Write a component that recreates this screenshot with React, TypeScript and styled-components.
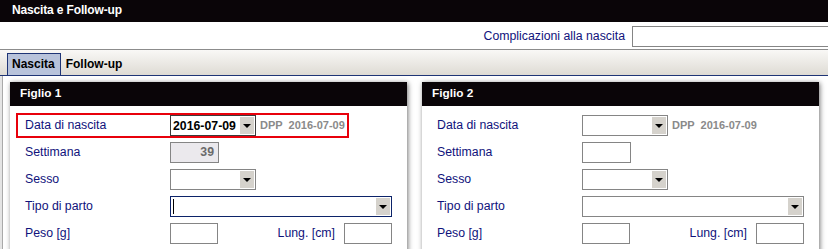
import React from "react";
import styled, { createGlobalStyle } from "styled-components";

const GlobalStyle = createGlobalStyle`
  html, body {
    margin: 0;
    padding: 0;
    background: #fff;
    font-family: "Liberation Sans", Arial, sans-serif;
  }
`;

const Screen = styled.div`
  width: 828px;
  height: 249px;
  overflow: hidden;
  background: #fff;
`;

const TitleBar = styled.div`
  height: 22px;
  line-height: 21px;
  padding-left: 12px;
  background: #0a0508;
  color: #fff;
  font-weight: bold;
  font-size: 12px;
  letter-spacing: -0.15px;
`;

const TopRow = styled.div`
  height: 28px;
  display: flex;
  justify-content: flex-end;
  align-items: flex-start;
  gap: 7px;
  padding-top: 4px;
  box-sizing: border-box;
  border-bottom: 1px solid #8c8c8c;
  overflow: hidden;
`;

const Label = styled.span<{ $width?: number }>`
  flex: none;
  width: ${(p) => (p.$width ? `${p.$width}px` : "auto")};
  color: #10137c;
  font-size: 12.3px;
  line-height: 21px;
  white-space: nowrap;
`;

const TextBox = styled.div<{ $width: number; $disabled?: boolean }>`
  flex: none;
  width: ${(p) => p.$width}px;
  height: 21px;
  box-sizing: border-box;
  border: 1px solid #858585;
  background: ${(p) => (p.$disabled ? "#ebe9ed" : "#fff")};
  color: #6a6a6a;
  font-size: 12.3px;
  font-weight: bold;
  line-height: 19px;
  text-align: right;
  padding-right: 4px;
`;

const WideBox = styled(TextBox)`
  margin-right: -12px;
`;

const TabBar = styled.div`
  height: 26px;
  box-sizing: border-box;
  padding: 3px 0 0 7px;
  display: flex;
  align-items: stretch;
  background: linear-gradient(#f9f8f6, #dedbd4);
  border-bottom: 1px solid #1f3576;
  box-shadow: 0 1px 0 #8ea2d0;
`;

const Tab = styled.div<{ $active?: boolean }>`
  padding: 0 5px 0 4px;
  font-size: 12px;
  font-weight: bold;
  line-height: 21px;
  color: #000;
  border: 1px solid ${(p) => (p.$active ? "#1f3576" : "transparent")};
  border-bottom: none;
  background: ${(p) => (p.$active ? "#b8c3db" : "transparent")};
`;

const Content = styled.div`
  display: flex;
  gap: 15px;
  padding: 6px 0 0 10px;
  height: 180px;
  background: linear-gradient(to right, #e4e4e4 0 2px, #a9a9a9 2px 3px, #fff 3px);
`;

const Panel = styled.section`
  width: 397px;
  flex: none;
  background: #fff;
  box-shadow: 1px 1px 5px rgba(0, 0, 0, 0.55);
`;

const PanelHeader = styled.div`
  height: 24px;
  line-height: 23px;
  padding-left: 10px;
  background: #0a0508;
  color: #fff;
  font-size: 11.8px;
  font-weight: bold;
`;

const PanelBody = styled.div`
  padding: 9px 15px 10px 15px;
  display: flex;
  flex-direction: column;
  gap: 6px;
`;

const Row = styled.div<{ $highlight?: boolean }>`
  display: flex;
  align-items: flex-start;
  height: 21px;
  ${(p) =>
    p.$highlight &&
    `
    align-self: flex-start;
    margin-left: -7px;
    padding: 0 2px 0 7px;
    outline: 2px solid #e8000b;
  `}
`;

const Fields = styled.div`
  flex: 1;
  display: flex;
  justify-content: space-between;
`;

const FieldGroup = styled.div`
  display: flex;
  gap: 9px;
`;

const Combo = styled.div<{ $width: number; $focused?: boolean; $dark?: boolean }>`
  flex: none;
  position: relative;
  width: ${(p) => p.$width}px;
  height: 21px;
  box-sizing: border-box;
  border: 1px solid
    ${(p) => (p.$focused ? "#0c2369" : p.$dark ? "#3c3c3c" : "#858585")};
  background: #fff;
  display: flex;
  align-items: center;
  padding: 1px;
`;

const ComboValue = styled.span`
  flex: 1;
  padding-left: 1px;
  font-size: 12.3px;
  font-weight: bold;
  color: #000;
`;

const Caret = styled.span`
  width: 1px;
  height: 15px;
  margin-left: 1px;
  background: #000;
`;

const ComboButton = styled.span`
  margin-left: auto;
  width: 14px;
  height: 17px;
  background: #d5d2cc;
  display: flex;
  align-items: center;
  justify-content: center;
  &::after {
    content: "";
    border-left: 4px solid transparent;
    border-right: 4px solid transparent;
    border-top: 4px solid #000;
    margin-top: 1px;
  }
`;

const Dpp = styled.span`
  margin-left: 4px;
  color: #8a8a8a;
  font-size: 11px;
  font-weight: bold;
  line-height: 21px;
  white-space: pre;
`;

type Child = { title: string; date?: string; weeks?: string };

const children: Child[] = [
  { title: "Figlio 1", date: "2016-07-09", weeks: "39" },
  { title: "Figlio 2" },
];

const ChildPanel = ({ child, first }: { child: Child; first: boolean }) => (
  <Panel>
    <PanelHeader>{child.title}</PanelHeader>
    <PanelBody>
      <Row $highlight={first}>
        <Label $width={145}>Data di nascita</Label>
        <Combo $width={86} $dark={!!child.date}>
          <ComboValue>{child.date}</ComboValue>
          <ComboButton />
        </Combo>
        <Dpp>{"DPP  2016-07-09"}</Dpp>
      </Row>
      <Row>
        <Label $width={145}>Settimana</Label>
        <TextBox $width={49} $disabled={!!child.weeks}>
          {child.weeks}
        </TextBox>
      </Row>
      <Row>
        <Label $width={145}>Sesso</Label>
        <Combo $width={86}>
          <ComboButton />
        </Combo>
      </Row>
      <Row>
        <Label $width={145}>Tipo di parto</Label>
        <Combo $width={222} $focused={first}>
          {first && <Caret />}
          <ComboButton />
        </Combo>
      </Row>
      <Row>
        <Label $width={145}>Peso [g]</Label>
        <Fields>
          <TextBox $width={48} />
          <FieldGroup>
            <Label>Lung. [cm]</Label>
            <TextBox $width={48} />
          </FieldGroup>
        </Fields>
      </Row>
    </PanelBody>
  </Panel>
);

export default function App() {
  return (
    <Screen>
      <GlobalStyle />
      <TitleBar>Nascita e Follow-up</TitleBar>
      <TopRow>
        <Label>Complicazioni alla nascita</Label>
        <WideBox $width={208} />
      </TopRow>
      <TabBar>
        <Tab $active>Nascita</Tab>
        <Tab>Follow-up</Tab>
      </TabBar>
      <Content>
        {children.map((c, i) => (
          <ChildPanel key={c.title} child={c} first={i === 0} />
        ))}
      </Content>
    </Screen>
  );
}
